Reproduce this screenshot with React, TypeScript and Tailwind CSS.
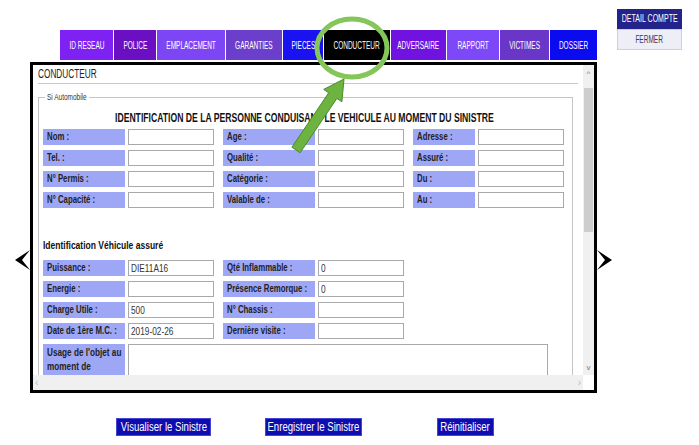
import React from 'react';

const tabs = [
  { label: 'ID RESEAU', cls: 'w-[53px] bg-[#7d22f2]' },
  { label: 'POLICE', cls: 'w-[42px] bg-[#6a0fc2]' },
  { label: 'EMPLACEMENT', cls: 'w-[68px] bg-[#7c46f5]' },
  { label: 'GARANTIES', cls: 'w-[56px] bg-[#6b3fcc]' },
  { label: 'PIECES', cls: 'w-[40px] bg-[#1a12f0]' },
  { label: 'CONDUCTEUR', cls: 'w-[66px] bg-black' },
  { label: 'ADVERSAIRE', cls: 'w-[55px] bg-[#7012e0]' },
  { label: 'RAPPORT', cls: 'w-[52px] bg-[#7d49f8]' },
  { label: 'VICTIMES', cls: 'w-[49px] bg-[#6a36c8]' },
  { label: 'DOSSIER', cls: 'w-[47px] bg-[#0b0bf0]' },
];

const persRows = [
  ['Nom :', 'Age :', 'Adresse :'],
  ['Tel. :', 'Qualité :', 'Assuré :'],
  ['N° Permis :', 'Catégorie :', 'Du :'],
  ['N° Capacité :', 'Valable de :', 'Au :'],
];

const vehRows = [
  ['Puissance :', 'DIE11A16', 'Qté Inflammable :', '0'],
  ['Energie :', '', 'Présence Remorque :', '0'],
  ['Charge Utile :', '500', 'N° Chassis :', ''],
  ['Date de 1ère M.C. :', '2019-02-26', 'Dernière visite :', ''],
];

// narrow text: the screenshot uses a condensed face, so squeeze Liberation Sans
function N({ children, s = 'scale-x-[0.72]', o = 'origin-left' }: { children: React.ReactNode; s?: string; o?: string }) {
  return <span className={`inline-block whitespace-nowrap ${o} ${s}`}>{children}</span>;
}

function Label({ text, w, m = '' }: { text: string; w: string; m?: string }) {
  return (
    <div className={`${w} ${m} h-[16px] shrink-0 bg-[#9ea7f6] pl-[4px] text-[10px] leading-[16px] font-bold text-[#222] overflow-hidden`}>
      <N s="scale-x-[0.78]">{text}</N>
    </div>
  );
}

function Field({ value = '', m = '' }: { value?: string; m?: string }) {
  return (
    <div className={`w-[86px] ${m} h-[16px] shrink-0 border border-[#a9a9a9] bg-white pl-[2px] text-[11.5px] leading-[14px] text-[#333] overflow-hidden`}>
      <N s="scale-x-[0.72]">{value}</N>
    </div>
  );
}

const App = () => {
  return (
    <div className="relative w-[699px] h-[445px] bg-white overflow-hidden font-['Liberation_Sans',Arial,sans-serif]">
      {/* top bar */}
      <div className="flex h-[60px]">
        <div className="ml-[60px] mt-[30px] flex gap-px h-[30px]">
          {tabs.map((t) => (
            <div key={t.label} className={`${t.cls} flex items-center justify-center text-white text-[10px] overflow-visible`}>
              <N s="scale-x-[0.65]" o="origin-center">{t.label}</N>
            </div>
          ))}
        </div>
        <div className="ml-[20px] mt-[9px] w-[65px]">
          <div className="h-[20px] bg-[#23238b] text-white text-[10.5px] flex items-center justify-center">
            <N s="scale-x-[0.67]" o="origin-center">DETAIL COMPTE</N>
          </div>
          <div className="h-[21px] bg-[#eeeef7] border border-[#cfcfdc] text-[#3a3a66] text-[10px] flex items-center justify-center">
            <N s="scale-x-[0.65]" o="origin-center">FERMER</N>
          </div>
        </div>
      </div>

      {/* main row */}
      <div className="flex mt-[2px]">
        <div className="w-[30px] pl-[15px] pt-[188px]">
          <svg width="15" height="20" viewBox="0 0 15 20">
            <polygon points="0,10 15,0 7,10 15,20" fill="#000" />
          </svg>
        </div>

        <div className="w-[567px] h-[331px] border-[3px] border-black flex flex-col bg-white">
          <div className="flex flex-1 min-h-0">
            <div className="flex-1 overflow-hidden pl-[5px] pr-[5px] pt-[1px]">
              <div className="h-[17px] text-[12.5px] leading-[17px] text-[#222]">
                <N s="scale-x-[0.66]">CONDUCTEUR</N>
              </div>
              <div className="h-px bg-[#c9c9c9]" />
              <fieldset className="mt-[8px] mr-[5px] border border-[#c4c4c4] pl-[4px] pr-[8px] pb-[20px]">
                <legend className="ml-[2px] pl-[2px] w-[44px] text-[9px] leading-[11px] text-[#333] overflow-visible">
                  <N s="scale-x-[0.72]">Si Automobile</N>
                </legend>
                <div className="mx-auto mt-[8px] w-[377px] h-[14px] text-[12.5px] leading-[14px] font-bold text-[#111]">
                  <N s="scale-x-[0.69]">IDENTIFICATION DE LA PERSONNE CONDUISANT LE VEHICULE AU MOMENT DU SINISTRE</N>
                </div>
                <div className="mt-[4px] flex flex-col gap-[5px]">
                  {persRows.map((r) => (
                    <div key={r[0]} className="flex items-center">
                      <Label text={r[0]} w="w-[82px]" />
                      <Field m="ml-[3px]" />
                      <Label text={r[1]} w="w-[92px]" m="ml-[9px]" />
                      <Field m="ml-[3px]" />
                      <Label text={r[2]} w="w-[62px]" m="ml-[9px]" />
                      <Field m="ml-[3px]" />
                    </div>
                  ))}
                </div>

                <div className="mt-[30px] h-[14px] text-[11.5px] leading-[14px] font-bold text-[#111]">
                  <N s="scale-x-[0.74]">Identification Véhicule assuré</N>
                </div>
                <div className="mt-[8px] flex flex-col gap-[5px]">
                  {vehRows.map((r) => (
                    <div key={r[0]} className="flex items-center">
                      <Label text={r[0]} w="w-[82px]" />
                      <Field value={r[1]} m="ml-[3px]" />
                      <Label text={r[2]} w="w-[92px]" m="ml-[9px]" />
                      <Field value={r[3]} m="ml-[3px]" />
                    </div>
                  ))}
                  <div className="flex items-start">
                    <div className="w-[82px] h-[50px] shrink-0 bg-[#9ea7f6] pl-[4px] pt-[2px] text-[10px] leading-[14px] font-bold text-[#222] overflow-hidden">
                      <span className="inline-block whitespace-nowrap origin-top-left scale-x-[0.82]">
                        Usage de l'objet au<br />moment de<br />sinistre :
                      </span>
                    </div>
                    <div className="ml-[3px] w-[420px] h-[50px] border border-[#a9a9a9] bg-white" />
                  </div>
                </div>
              </fieldset>
            </div>
            {/* vertical scrollbar */}
            <div className="w-[11px] bg-[#f0f0f0] flex flex-col items-center">
              <div className="h-[23px] text-[8px] leading-[18px] text-[#777]">^</div>
              <div className="w-[9px] h-[144px] bg-[#cdcdcd]" />
              <div className="flex-1" />
              <div className="h-[14px] text-[8px] leading-[14px] text-[#777]">v</div>
            </div>
          </div>
          {/* horizontal scrollbar */}
          <div className="h-[15px] flex">
            <div className="flex-1 bg-[#f0f0f0] flex items-center justify-between px-[2px] text-[10px] text-[#bbb]">
              <span>‹</span>
              <span>›</span>
            </div>
            <div className="w-[11px] bg-white" />
          </div>
        </div>

        <div className="w-[30px] pt-[188px]">
          <svg width="15" height="20" viewBox="0 0 15 20">
            <polygon points="15,10 0,0 8,10 0,20" fill="#000" />
          </svg>
        </div>
      </div>

      {/* bottom buttons */}
      <div className="mt-[25px] flex pl-[116px]">
        <div className="w-[95px] h-[18px] bg-[#0d0db0] border border-[#4646d0] text-white text-[12px] flex items-center justify-center">
          <N s="scale-x-[0.8]" o="origin-center">Visualiser le Sinistre</N>
        </div>
        <div className="ml-[54px] w-[97px] h-[18px] bg-[#0d0db0] border border-[#4646d0] text-white text-[12px] flex items-center justify-center">
          <N s="scale-x-[0.8]" o="origin-center">Enregistrer le Sinistre</N>
        </div>
        <div className="ml-[75px] w-[57px] h-[18px] bg-[#0d0db0] border border-[#4646d0] text-white text-[12px] flex items-center justify-center">
          <N s="scale-x-[0.8]" o="origin-center">Réinitialiser</N>
        </div>
      </div>

      {/* annotation overlay */}
      <svg className="absolute inset-0 pointer-events-none" width="699" height="445">
        <ellipse cx="352" cy="48" rx="35" ry="29" fill="none" stroke="#84c65a" strokeWidth="5" />
        <polygon
          points="291.9,147.2 328.7,92.8 323.7,89.4 344,79 341.9,101.8 336.9,98.4 300.1,152.8"
          fill="#6db33f"
          stroke="#4d8a2c"
          strokeWidth="1"
        />
      </svg>
    </div>
  );
};

export default App;
